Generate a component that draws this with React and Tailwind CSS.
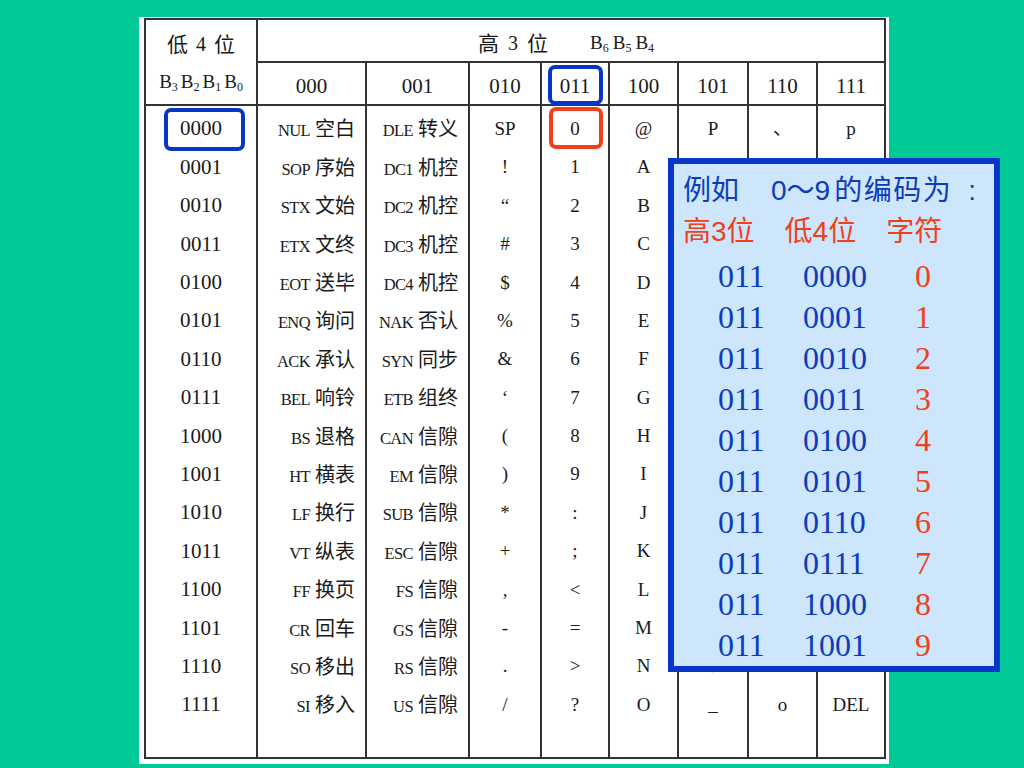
const LOW = ['0000','0001','0010','0011','0100','0101','0110','0111','1000','1001','1010','1011','1100','1101','1110','1111'];
const C000 = [['NUL','空白'],['SOP','序始'],['STX','文始'],['ETX','文终'],['EOT','送毕'],['ENQ','询问'],['ACK','承认'],['BEL','响铃'],['BS','退格'],['HT','横表'],['LF','换行'],['VT','纵表'],['FF','换页'],['CR','回车'],['SO','移出'],['SI','移入']];
const C001 = [['DLE','转义'],['DC1','机控'],['DC2','机控'],['DC3','机控'],['DC4','机控'],['NAK','否认'],['SYN','同步'],['ETB','组终'],['CAN','信隙'],['EM','信隙'],['SUB','信隙'],['ESC','信隙'],['FS','信隙'],['GS','信隙'],['RS','信隙'],['US','信隙']];
const C010 = ['SP','!','“','#','$','%','&','‘','(',')','*','+',',','-','.','/'];
const C011 = ['0','1','2','3','4','5','6','7','8','9',':',';','<','=','>','?'];
const C100 = ['@','A','B','C','D','E','F','G','H','I','J','K','L','M','N','O'];
// rows 1-13 of the last three columns lie under the example box
const C101 = ['P','','','','','','','','','','','','','','↑','_'];
const C110 = ['、','','','','','','','','','','','','','','n','o'];
const C111 = ['p','','','','','','','','','','','','','','','DEL'];
const HEAD = ['000','001','010','011','100','101','110','111'];
const CODES = ['0000','0001','0010','0011','0100','0101','0110','0111','1000','1001'];

function CtrlCol({ data }) {
  return (
    <div className="flex flex-col pt-[4px] border-r-2 border-[#333]">
      {data.map(([a, b], i) => (
        <div key={i} className="h-[38.4px] flex items-center justify-end pr-[10px]">
          <div className="leading-none whitespace-nowrap">
            <span className="font-['Liberation_Serif',serif] text-[16.5px] tracking-[-0.6px]">{a}</span>
            <span className="ml-[5px] font-['Noto_Sans_CJK_SC',sans-serif] text-[20px]">{b}</span>
          </div>
        </div>
      ))}
    </div>
  );
}

function CharCol({ data, last }) {
  return (
    <div className={`flex flex-col pt-[4px] ${last ? '' : 'border-r-2 border-[#333]'}`}>
      {data.map((c, i) => (
        <div key={i} className="h-[38.4px] flex items-center justify-center font-['Liberation_Serif','DejaVu_Serif','Noto_Sans_CJK_SC',serif] text-[19px]">
          {c}
        </div>
      ))}
    </div>
  );
}

function Bsub({ n }) {
  return (
    <span className="font-['Liberation_Serif',serif] text-[19px]">
      B<span className="text-[12px] relative top-[3px]">{n}</span>
    </span>
  );
}

export default function App() {
  return (
    <div className="relative w-[1024px] h-[768px] bg-[#00c997] overflow-hidden pt-[17px] pl-[139px]">
      <div className="w-[750px] h-[747px] bg-white pt-[1px] pl-[5px]">
        <div className="w-[742px] h-[741px] border-2 border-[#333] text-[#1a1a1a] grid grid-cols-[112px_109px_103px_72px_68px_69px_70px_69px_1fr] grid-rows-[43px_43px_1fr]">
          <div className="row-span-2 border-r-2 border-b-2 border-[#333] flex flex-col">
            <div className="h-[43px] flex items-center justify-center gap-[8px] pt-[5px]">
              <span className="font-['Noto_Sans_CJK_SC',sans-serif] text-[21px]">低</span>
              <span className="font-['Liberation_Serif',serif] text-[20px]">4</span>
              <span className="font-['Noto_Sans_CJK_SC',sans-serif] text-[21px]">位</span>
            </div>
            <div className="h-[43px] flex items-center justify-center gap-[3px] pb-[2px]">
              <Bsub n="3" /><Bsub n="2" /><Bsub n="1" /><Bsub n="0" />
            </div>
          </div>
          <div className="col-span-8 border-b-2 border-[#333] flex items-center pl-[220px] pt-[5px]">
            <div className="flex items-center gap-[9px]">
              <span className="font-['Noto_Sans_CJK_SC',sans-serif] text-[21px]">高</span>
              <span className="font-['Liberation_Serif',serif] text-[20px]">3</span>
              <span className="font-['Noto_Sans_CJK_SC',sans-serif] text-[21px]">位</span>
            </div>
            <div className="flex items-center gap-[4px] ml-[42px]">
              <Bsub n="6" /><Bsub n="5" /><Bsub n="4" />
            </div>
          </div>
          {HEAD.map((h, i) => (
            <div key={h} className={`border-b-2 border-[#333] flex items-center justify-center pt-[6px] font-['Liberation_Serif',serif] text-[21px] ${i < 7 ? 'border-r-2' : ''}`}>
              {h}
            </div>
          ))}
          <div className="flex flex-col pt-[4px] border-r-2 border-[#333]">
            {LOW.map((l) => (
              <div key={l} className="h-[38.4px] flex items-center justify-center font-['Liberation_Serif',serif] text-[21px]">{l}</div>
            ))}
          </div>
          <CtrlCol data={C000} />
          <CtrlCol data={C001} />
          <CharCol data={C010} />
          <CharCol data={C011} />
          <CharCol data={C100} />
          <CharCol data={C101} />
          <CharCol data={C110} />
          <CharCol data={C111} last />
        </div>
      </div>

      <div className="absolute left-[164px] top-[108px] w-[81px] h-[43px] border-[4px] border-[#0a35c4] rounded-[7px]" />
      <div className="absolute left-[548px] top-[65px] w-[55px] h-[40px] border-[4px] border-[#0a35c4] rounded-[7px]" />
      <div className="absolute left-[549px] top-[107px] w-[54px] h-[42px] border-[4px] border-[#f0401a] rounded-[7px]" />

      <div className="absolute left-[668px] top-[158px] w-[332px] h-[514px] border-[6px] border-[#0836c8] bg-[#cde6fb] pl-[9px] pt-[6px]">
        <div className="h-[41px] flex items-center whitespace-nowrap text-[28px] text-[#0c3cbc] font-['Liberation_Sans','Noto_Sans_CJK_SC',sans-serif]">
          <span>例如</span>
          <span className="ml-[32px]">0～9</span>
          <span className="ml-[4px] tracking-[1.5px]">的编码为</span>
          <span className="ml-[16px]">:</span>
        </div>
        <div className="h-[41px] flex items-center whitespace-nowrap text-[28px] text-[#f0401a] font-['Liberation_Sans','Noto_Sans_CJK_SC',sans-serif]">
          <span>高3位</span>
          <span className="ml-[30px]">低4位</span>
          <span className="ml-[30px]">字符</span>
        </div>
        {CODES.map((c, i) => (
          <div key={c} className="h-[41px] grid grid-cols-[85px_112px_auto] items-center pl-[35px] text-[32px] font-['Liberation_Serif',serif]">
            <span className="text-[#0c3cbc]">011</span>
            <span className="text-[#0c3cbc]">{c}</span>
            <span className="text-[#f0401a]">{i}</span>
          </div>
        ))}
      </div>
    </div>
  );
}
